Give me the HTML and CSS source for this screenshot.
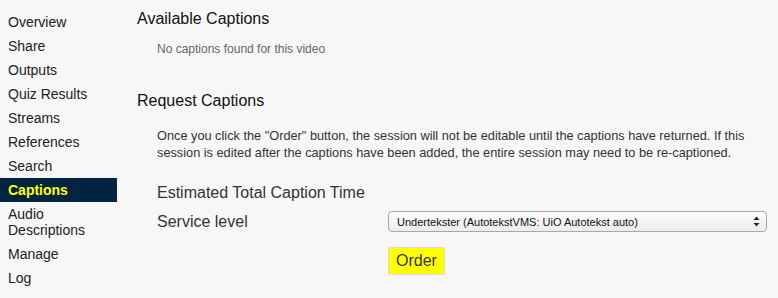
FILE: index.html
```html
<!DOCTYPE html>
<html>
<head>
<meta charset="utf-8">
<link rel="stylesheet" href="styles.css">
</head>
<body>
<div class="page">
  <nav class="sidebar">
    <div class="nav-item">Overview</div>
    <div class="nav-item">Share</div>
    <div class="nav-item">Outputs</div>
    <div class="nav-item">Quiz Results</div>
    <div class="nav-item">Streams</div>
    <div class="nav-item">References</div>
    <div class="nav-item">Search</div>
    <div class="nav-item active">Captions</div>
    <div class="nav-item">Audio<br>Descriptions</div>
    <div class="nav-item">Manage</div>
    <div class="nav-item">Log</div>
  </nav>
  <main class="content">
    <h2 class="section-title">Available Captions</h2>
    <p class="empty">No captions found for this video</p>
    <h2 class="section-title request">Request Captions</h2>
    <p class="notice">Once you click the "Order" button, the session will not be editable until the captions have returned. If this session is edited after the captions have been added, the entire session may need to be re-captioned.</p>
    <div class="form">
      <div class="label">Estimated Total Caption Time</div>
      <div class="value"></div>
      <div class="label">Service level</div>
      <div class="value">
        <div class="select">
          <span>Undertekster (AutotekstVMS: UiO Autotekst auto)</span>
          <svg class="arrows" width="7" height="11" viewBox="0 0 7 11"><path d="M3.5 0.5 L6.5 4 L0.5 4 Z M3.5 10.5 L6.5 7 L0.5 7 Z" fill="#222"/></svg>
        </div>
      </div>
      <div class="label"></div>
      <div class="value"><button class="order">Order</button></div>
    </div>
  </main>
</div>
</body>
</html>
```

FILE: styles.css
```css
html, body {
  margin: 0;
  padding: 0;
  background: #f7f7f7;
  font-family: "Liberation Sans", Arial, Helvetica, sans-serif;
  color: #333;
}
.page {
  display: flex;
  align-items: flex-start;
  width: 778px;
  height: 298px;
  overflow: hidden;
}
.sidebar {
  width: 117px;
  flex: none;
  padding-top: 10px;
}
.nav-item {
  font-size: 14px;
  line-height: 16px;
  padding: 4px 8px;
  color: #222;
}
.nav-item.active {
  background: #022441;
  color: #ffff00;
  font-weight: bold;
}
.content {
  flex: 1;
  padding-left: 20px;
  padding-right: 11px;
}
.section-title {
  font-size: 16px;
  font-weight: normal;
  line-height: 20px;
  margin: 9px 0 0 0;
  color: #111;
}
.section-title.request {
  margin-top: 34px;
}
.empty {
  margin: 12px 0 0 20px;
  font-size: 12px;
  line-height: 16px;
  color: #666;
}
.notice {
  margin: 16px 0 0 20px;
  font-size: 12.75px;
  line-height: 17px;
  color: #333;
}
.form {
  margin: 22px 0 0 20px;
  display: grid;
  grid-template-columns: 231px 1fr;
  row-gap: 8px;
  align-items: center;
}
.label {
  font-size: 16px;
  line-height: 20px;
  color: #333;
}
.select {
  height: 19px;
  border: 1px solid #a8a8a8;
  border-radius: 4px;
  background: linear-gradient(#fdfdfd, #ececec);
  display: flex;
  align-items: center;
  justify-content: space-between;
  padding: 0 6px 0 8px;
  font-size: 11px;
  color: #111;
}
.arrows {
  display: block;
}
.order {
  margin-top: 7px;
  background: #ffff00;
  border: 1px solid #d8d8d8;
  border-radius: 2px;
  font-family: "Liberation Sans", Arial, sans-serif;
  font-size: 16px;
  color: #333;
  height: 28px;
  padding: 0 7px;
}
```
